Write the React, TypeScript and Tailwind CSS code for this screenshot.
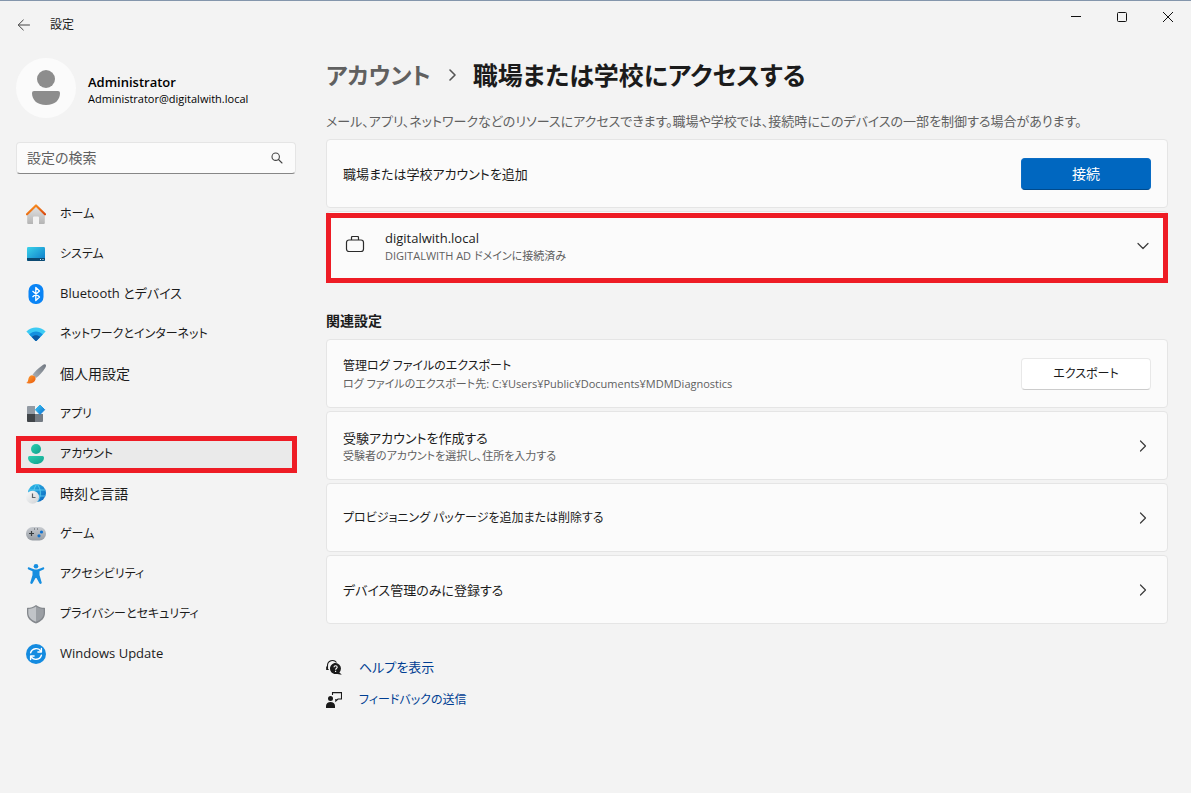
import React, { ReactNode } from 'react';

interface NavItem {
  label: string;
  icon: ReactNode;
  active?: boolean;
  size: string;
}

const HomeIcon = () => (
  <svg className="h-5 w-5" viewBox="0 0 20 20">
    <defs>
      <linearGradient id="homeWall" x1="0" y1="0" x2="0" y2="1">
        <stop offset="0" stopColor="#e2e2e2" />
        <stop offset="1" stopColor="#b4b4b4" />
      </linearGradient>
      <linearGradient id="homeRoof" x1="0" y1="0" x2="1" y2="1">
        <stop offset="0" stopColor="#ff9a1f" />
        <stop offset="1" stopColor="#d9480f" />
      </linearGradient>
    </defs>
    <path d="M10 2.5 1.2 10.8V19a1 1 0 0 0 1 1H7v-6.5a1 1 0 0 1 1-1h4a1 1 0 0 1 1 1V20h4.8a1 1 0 0 0 1-1v-8.2z" fill="url(#homeWall)" />
    <path d="M1 10.3 10 1.5l9 8.8" fill="none" stroke="url(#homeRoof)" strokeWidth="2.2" strokeLinecap="round" strokeLinejoin="round" />
  </svg>
);

const SystemIcon = () => (
  <svg className="h-5 w-5" viewBox="0 0 20 20">
    <defs>
      <linearGradient id="screen" x1="0" y1="0" x2="1" y2="1">
        <stop offset="0" stopColor="#3ad3ea" />
        <stop offset="1" stopColor="#0b78c8" />
      </linearGradient>
    </defs>
    <rect x="1" y="3" width="18" height="14" rx="1.2" fill="url(#screen)" />
    <path d="M1 14h18v1.8a1.2 1.2 0 0 1-1.2 1.2H2.2A1.2 1.2 0 0 1 1 15.8z" fill="#0c4a72" />
    <path d="M14 15h1v1h-1zM16.5 15h1v1h-1z" fill="#d5eefa" />
  </svg>
);

const BluetoothIcon = () => (
  <svg className="h-5 w-5" viewBox="0 0 20 20">
    <rect x="2.5" y="0" width="15" height="20" rx="7" fill="#0a84f5" />
    <path d="m6.5 7 7 6-3.7 3.5v-13L13.500 7l-7 6" fill="none" stroke="#fff" strokeWidth="1.3" strokeLinejoin="round" />
  </svg>
);

const NetworkIcon = () => (
  <svg className="h-5 w-5" viewBox="0 0 20 20">
    <path d="M.4 7.500C5.700 2 14.300 2 19.600 7.500L10.600 16.800a.9.9 0 0 1-1.200 0z" fill="#3ccbf4" />
    <path d="M3.200 10.500c3.800-3.900 9.800-3.900 13.600 0l-6.200 6.300a.9.9 0 0 1-1.200 0z" fill="#1490df" />
    <path d="M5.800 13c2.400-2.400 6-2.400 8.400 0l-3.600 3.800a.9.9 0 0 1-1.200 0z" fill="#0c59a4" />
  </svg>
);

const PersonalizationIcon = () => (
  <svg className="h-5 w-5" viewBox="0 0 20 20">
    <defs>
      <linearGradient id="handle" x1="1" y1="0" x2="0" y2="1">
        <stop offset="0" stopColor="#707780" />
        <stop offset="1" stopColor="#aab1b8" />
      </linearGradient>
      <linearGradient id="bristle" x1="0" y1="0" x2="1" y2="1">
        <stop offset="0" stopColor="#ffa033" />
        <stop offset="1" stopColor="#e8590c" />
      </linearGradient>
    </defs>
    <path d="M19.5.5c.8.8.6 2-.2 3.200C16.500 8 13 12 10 14l-3.500-3.300C9 7.500 12.500 4 16.500 1.200 17.700.3 18.800-.2 19.500.5z" fill="url(#handle)" />
    <path d="M6.200 11.200c2.500.3 3.800 2 3.300 4.200-.8 3.300-5.500 5-9.300 3.600C2 18 2 16.500 2.500 14.500c.5-2 1.800-3.400 3.700-3.300z" fill="url(#bristle)" />
  </svg>
);

const AppsIcon = () => (
  <svg className="h-5 w-5" viewBox="0 0 20 20">
    <defs>
      <linearGradient id="tile" x1="0" y1="0" x2="1" y2="1">
        <stop offset="0" stopColor="#41c8f2" />
        <stop offset="1" stopColor="#0a6fd0" />
      </linearGradient>
    </defs>
    <path d="M2 2h7v8H1V3a1 1 0 0 1 1-1z" fill="#929aa3" />
    <path d="M1 10h8v8H2a1 1 0 0 1-1-1z" fill="#414549" />
    <path d="M9 10h8v7a1 1 0 0 1-1 1H9z" fill="#747b83" />
    <path d="m14 1 4.700 4.700L14 10.400 9.300 5.700z" fill="url(#tile)" stroke="url(#tile)" strokeLinejoin="round" />
  </svg>
);

const AccountsIcon = () => (
  <svg className="h-5 w-5" viewBox="0 0 20 20">
    <defs>
      <linearGradient id="person" x1="0" y1="0" x2="1" y2="1">
        <stop offset="0" stopColor="#2bd0b0" />
        <stop offset="1" stopColor="#11a08e" />
      </linearGradient>
    </defs>
    <circle cx="10" cy="5" r="5" fill="url(#person)" />
    <path d="M3.500 12h13a1.500 1.500 0 0 1 1.500 1.500C18 17.500 14.500 20 10 20s-8-2.500-8-6.500A1.500 1.500 0 0 1 3.500 12z" fill="url(#person)" />
  </svg>
);

const TimeIcon = () => (
  <svg className="h-5 w-5" viewBox="0 0 20 20">
    <defs>
      <linearGradient id="globe" x1="0" y1="0" x2="1" y2="1">
        <stop offset="0" stopColor="#2fc0ea" />
        <stop offset="1" stopColor="#0c62bd" />
      </linearGradient>
      <linearGradient id="clock" x1="0" y1="0" x2="1" y2="1">
        <stop offset="0" stopColor="#fafafa" />
        <stop offset="1" stopColor="#cfd2d5" />
      </linearGradient>
    </defs>
    <circle cx="11" cy="9" r="9" fill="url(#globe)" />
    <path d="M2.800 6h16.400M2.800 12h16.400M11 0c-4.500 5-4.500 13 0 18 4.500-5 4.500-13 0-18z" fill="none" stroke="#63d5f5" strokeWidth=".8" />
    <circle cx="6.500" cy="13.200" r="6.500" fill="url(#clock)" />
    <path d="M6.500 9.500v4h3" fill="none" stroke="#5c6268" strokeWidth="1.200" />
  </svg>
);

const GamingIcon = () => (
  <svg className="h-5 w-5" viewBox="0 0 20 20">
    <defs>
      <linearGradient id="pad" x1="0" y1="0" x2="0" y2="1">
        <stop offset="0" stopColor="#c7cbd0" />
        <stop offset="1" stopColor="#969ca3" />
      </linearGradient>
    </defs>
    <rect x="0" y="3" width="20" height="13.500" rx="6.500" fill="url(#pad)" />
    <path d="M5.500 7v5M3 9.500h5" stroke="#383c40" strokeWidth="1.200" />
    <path d="M8 4.500h1v1H8zM11 4.500h1v1h-1z" fill="#50555a" />
    <circle cx="15.500" cy="8" r="1.600" fill="#0f72cf" />
    <circle cx="13" cy="11.800" r="1.600" fill="#0f72cf" />
  </svg>
);

const AccessibilityIcon = () => (
  <svg className="h-5 w-5" viewBox="0 0 20 20">
    <g fill="#168ee0">
      <circle cx="10" cy="2.300" r="2.300" />
      <path d="M3.300 3.400 8 5.200c1.300.4 2.700.4 4 0l4.700-1.800c1.500-.5 2.200 1.500.8 2.100l-4 1.700v3.800l2.200 7.400c.4 1.500-1.700 2.200-2.300.8L10.500 14h-1l-2.900 5.200c-.6 1.400-2.700.7-2.300-.8L6.500 11V7.200l-4-1.700c-1.400-.6-.7-2.600.8-2.100z" />
    </g>
  </svg>
);

const PrivacyIcon = () => (
  <svg className="h-5 w-5" viewBox="0 0 20 20">
    <path d="M10 1c2.500 2 5.500 2.800 8.500 2.800.3 0 .5.2.5.5V9c0 5-3.500 8.500-9 10.500C4.500 17.500 1 14 1 9V4.300c0-.3.2-.5.5-.5C4.500 3.800 7.500 3 10 1z" fill="#83878c" />
    <path d="M10 2.500v15.300C5.300 16 2.300 13 2.300 9V5C5 4.800 7.700 4.200 10 2.500z" fill="#c1c4c8" />
    <path d="M10 2.500v15.300C14.700 16 17.700 13 17.700 9V5C15 4.800 12.300 4.200 10 2.500z" fill="#9b9fa4" />
  </svg>
);

const UpdateIcon = () => (
  <svg className="h-5 w-5" viewBox="0 0 20 20">
    <circle cx="10" cy="10" r="10" fill="#148be0" />
    <path d="M4.600 8.800A5.700 5.700 0 0 1 15 7.500M15.400 11.200A5.700 5.700 0 0 1 5 12.500" fill="none" stroke="#fff" strokeWidth="1.400" strokeLinecap="round" />
    <path d="M15.400 4.500v3.500h-3.500M4.600 15.500V12h3.500" fill="none" stroke="#fff" strokeWidth="1.400" strokeLinecap="round" strokeLinejoin="round" />
  </svg>
);

// katakana labels are set one step smaller than kanji and latin ones
const navItems: NavItem[] = [
  { label: 'ホーム', icon: <HomeIcon />, size: 'text-xs' },
  { label: 'システム', icon: <SystemIcon />, size: 'text-xs' },
  { label: 'Bluetooth とデバイス', icon: <BluetoothIcon />, size: 'text-[13px]' },
  { label: 'ネットワークとインターネット', icon: <NetworkIcon />, size: 'text-xs' },
  { label: '個人用設定', icon: <PersonalizationIcon />, size: 'text-sm' },
  { label: 'アプリ', icon: <AppsIcon />, size: 'text-xs' },
  { label: 'アカウント', icon: <AccountsIcon />, active: true, size: 'text-xs' },
  { label: '時刻と言語', icon: <TimeIcon />, size: 'text-sm' },
  { label: 'ゲーム', icon: <GamingIcon />, size: 'text-xs' },
  { label: 'アクセシビリティ', icon: <AccessibilityIcon />, size: 'text-xs' },
  { label: 'プライバシーとセキュリティ', icon: <PrivacyIcon />, size: 'text-xs' },
  { label: 'Windows Update', icon: <UpdateIcon />, size: 'text-[13px]' },
];

const Chevron = ({ down = false }: { down?: boolean }) => (
  <svg className="h-4 w-4 shrink-0" viewBox="0 0 16 16" fill="none" stroke="#3a3a3a" strokeWidth="1.200" strokeLinecap="round" strokeLinejoin="round">
    {down ? <path d="m3 5.500 5 5 5-5" /> : <path d="m5.500 3 5 5-5 5" />}
  </svg>
);

const TitleBar = () => (
  <header className="flex h-[51px] items-start justify-between border-t border-[#8496ac]">
    <div className="flex h-12 items-center gap-[18px] pl-4">
      <button type="button" aria-label="戻る">
        <svg className="h-4 w-4" viewBox="0 0 16 16" fill="none" stroke="#444" strokeLinecap="round" strokeLinejoin="round">
          <path d="M13.500 8h-11M7.300 3 2.200 8l5.100 5" />
        </svg>
      </button>
      <span className="text-xs">設定</span>
    </div>
    <div className="flex">
      <button type="button" aria-label="最小化" className="flex h-8 w-[46px] items-center justify-center">
        <svg className="h-3 w-3" viewBox="0 0 12 12" fill="none" stroke="#111">
          <path d="M1 5.500h10" />
        </svg>
      </button>
      <button type="button" aria-label="最大化" className="flex h-8 w-[46px] items-center justify-center">
        <svg className="h-3 w-3" viewBox="0 0 12 12" fill="none" stroke="#111">
          <rect x="1.500" y="1.500" width="9" height="9" rx="1" />
        </svg>
      </button>
      <button type="button" aria-label="閉じる" className="flex h-8 w-[46px] items-center justify-center">
        <svg className="h-3 w-3" viewBox="0 0 12 12" fill="none" stroke="#111">
          <path d="m1 1 10 10M11 1 1 11" />
        </svg>
      </button>
    </div>
  </header>
);

const Sidebar = () => (
  <aside className="w-[280px] shrink-0">
    <div className="flex items-center gap-3 pt-[7px]">
      <div className="flex h-[60px] w-[60px] items-center justify-center rounded-full bg-[#fbfbfb]">
        <svg className="h-9 w-7" viewBox="0 0 28 36" fill="#8d8d8d">
          <circle cx="14" cy="9" r="9" />
          <path d="M2 21h24a2 2 0 0 1 2 2c0 7-5 12-14 12S0 30 0 23a2 2 0 0 1 2-2z" />
        </svg>
      </div>
      <div className="pt-1">
        <p className="text-[13px] leading-[18px] font-semibold text-black">Administrator</p>
        <p className="text-[11px] leading-4 text-black">Administrator@digitalwith.local</p>
      </div>
    </div>

    <div className="mt-6 flex h-8 items-center rounded border border-[#e5e5e5] border-b-[#868686] bg-[#fbfbfb] px-[10px]">
      <input
        type="text"
        aria-label="設定の検索"
        placeholder="設定の検索"
        className="min-w-0 flex-1 bg-transparent text-sm placeholder-[#606060] outline-none"
      />
      <svg className="h-4 w-4" viewBox="0 0 16 16" fill="none" stroke="#444" strokeWidth="1.100" strokeLinecap="round">
        <circle cx="6.700" cy="6.700" r="3.700" />
        <path d="m9.500 9.500 3.500 3.500" />
      </svg>
    </div>

    <nav className="mt-[22px]">
      <ul className="flex flex-col gap-1">
        {navItems.map((item) => (
          <li key={item.label}>
            <a
              href="#"
              aria-current={item.active ? 'page' : undefined}
              className={`relative flex h-9 items-center gap-[14px] rounded pl-[10px] ${item.size} ${item.active ? 'bg-[#eaeaea]' : ''}`}
            >
              {item.icon}
              <span>{item.label}</span>
              {item.active && <span className="absolute -right-px -bottom-px left-0 top-0 border-[5px] border-[#ee1c25]" />}
            </a>
          </li>
        ))}
      </ul>
    </nav>
  </aside>
);

interface SettingCardProps {
  title: string;
  description?: string;
  icon?: ReactNode;
  action: ReactNode;
  compact?: boolean;
  highlighted?: boolean;
}

const SettingCard: React.FC<SettingCardProps> = ({ title, description, icon, action, compact, highlighted }) => (
  <div className="relative flex min-h-[69px] items-center rounded border border-[#e5e5e5] bg-[#fbfbfb] px-4">
    {icon && <div className="mr-[18px] flex w-6 justify-center">{icon}</div>}
    <div className="flex-1">
      <h3 className={`leading-5 ${compact ? 'text-xs' : 'text-[13px]'}`}>{title}</h3>
      {description && <p className="text-[11px] leading-4 text-[#606060]">{description}</p>}
    </div>
    {action}
    {highlighted && <span className="absolute -inset-x-px -bottom-1 top-px border-[5px] border-[#ee1c25]" />}
  </div>
);

const BriefcaseIcon = () => (
  <svg className="h-5 w-5" viewBox="0 0 20 20" fill="none" stroke="#2b2b2b" strokeWidth="1.200">
    <rect x="1.500" y="4" width="17" height="11.500" rx="2.500" />
    <path d="M6.500 4V1.500a1 1 0 0 1 1-1h5a1 1 0 0 1 1 1V4" />
  </svg>
);

const HelpIcon = () => (
  <svg className="h-4 w-4" viewBox="0 0 16 16">
    <path d="M1.500 10V6.500a5 5 0 0 1 9-3M.7 7.500v3h2" fill="none" stroke="#1a1a1a" strokeWidth="1.100" />
    <path d="M9.500 4a5.500 5.500 0 1 1-.1 11c-3 0-5.400-2.500-5.400-5.500S6.500 4 9.500 4zM13 13l2.800 2.800-4.500-.8z" fill="#1a1a1a" />
    <path d="M8 8.300c0-2 3.200-2 3.200 0 0 1.200-1.600 1.200-1.600 2.400M9.600 11.700v1.200" fill="none" stroke="#fff" strokeWidth="1.100" />
  </svg>
);

const FeedbackIcon = () => (
  <svg className="h-4 w-4" viewBox="0 0 16 16">
    <circle cx="4.500" cy="6.500" r="2.500" fill="#1a1a1a" />
    <path d="M0 16v-2c0-2.500 2-4 4.500-4S9 11.500 9 14v2z" fill="#1a1a1a" />
    <path d="M6.500 3V.6h9V7H12L9.800 9V7" fill="none" stroke="#1a1a1a" strokeWidth="1.100" />
  </svg>
);

const App: React.FC = () => (
  <div className="min-h-screen bg-[#f3f3f3] font-['Open_Sans','Noto_Sans_CJK_JP',sans-serif] text-[#1b1b1b] [font-feature-settings:'palt']">
    <TitleBar />
    <div className="flex gap-[30px] pl-4 pr-[23px] pb-10">
      <Sidebar />
      <main className="min-w-0 flex-1">
        <h1 className="flex items-center pt-[6px] text-[25px] leading-9 font-semibold">
          <a href="#" className="text-[23px] text-[#606060]">アカウント</a>
          <svg className="mx-[15px] h-3 w-3" viewBox="0 0 12 12" fill="none" stroke="#555" strokeWidth="1.600" strokeLinecap="round" strokeLinejoin="round">
            <path d="m4 1 5 5-5 5" />
          </svg>
          <span>職場または学校にアクセスする</span>
        </h1>
        <p className="mt-[18px] mb-2 text-[13px] leading-5 text-[#606060]">
          メール、アプリ、ネットワークなどのリソースにアクセスできます。職場や学校では、接続時にこのデバイスの一部を制御する場合があります。
        </p>

        <section className="flex flex-col gap-[3px]">
          <SettingCard
            title="職場または学校アカウントを追加"
            action={
              <button type="button" className="h-8 w-[130px] rounded border border-[#0a6cc4] border-b-[#004a8c] bg-[#0067c0] text-sm text-white">
                接続
              </button>
            }
          />
          <SettingCard
            title="digitalwith.local"
            description="DIGITALWITH AD ドメインに接続済み"
            icon={<BriefcaseIcon />}
            action={<Chevron down />}
            highlighted
          />
        </section>

        <h2 className="mt-[31px] mb-2 text-sm leading-5 font-semibold">関連設定</h2>
        <section className="flex flex-col gap-[3px]">
          <SettingCard
            title="管理ログ ファイルのエクスポート"
            description="ログ ファイルのエクスポート先: C:¥Users¥Public¥Documents¥MDMDiagnostics"
            compact
            action={
              <button type="button" className="h-8 w-[130px] rounded border border-[#e8e8e8] border-b-[#cccccc] bg-white text-xs">
                エクスポート
              </button>
            }
          />
          <SettingCard title="受験アカウントを作成する" description="受験者のアカウントを選択し、住所を入力する" action={<Chevron />} />
          <SettingCard title="プロビジョニング パッケージを追加または削除する" compact action={<Chevron />} />
          <SettingCard title="デバイス管理のみに登録する" action={<Chevron />} />
        </section>

        <footer className="mt-[33px] flex flex-col gap-[13px] leading-5 text-[#003e92]">
          <a href="#" className="flex items-center gap-[17px] text-[13px] leading-5">
            <HelpIcon />
            ヘルプを表示
          </a>
          <a href="#" className="flex items-center gap-[17px] text-xs leading-5">
            <FeedbackIcon />
            フィードバックの送信
          </a>
        </footer>
      </main>
    </div>
  </div>
);

export default App;
